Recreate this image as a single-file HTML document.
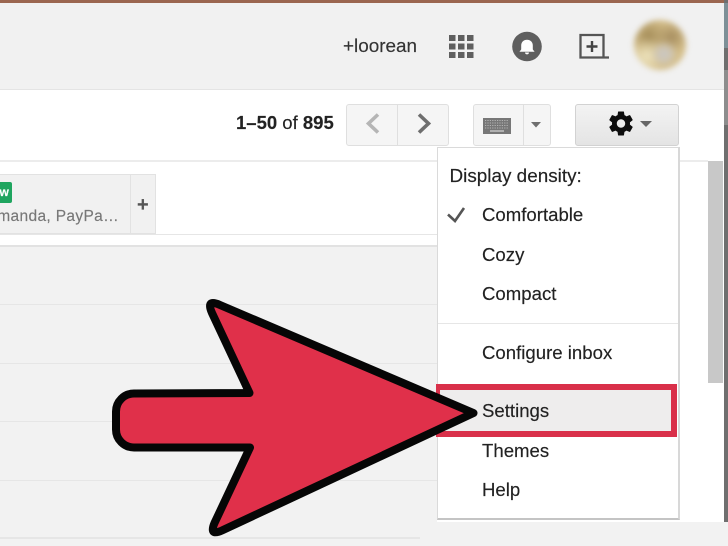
<!DOCTYPE html>
<html><head><meta charset="utf-8">
<style>
html,body{margin:0;padding:0;background:#fff}
#p{position:relative;width:728px;height:546px;overflow:hidden;background:#fff;font-family:"Liberation Sans",Arial,sans-serif;color:#222}
#p div,#p span.t{position:absolute}
.t{white-space:nowrap;line-height:1;filter:blur(.35px);-webkit-text-stroke:.15px currentColor}
.m{left:482px;font-size:18.6px;color:#222}
.btn{box-sizing:border-box;background:#f5f5f5;border:1px solid #dfdfdf;border-radius:3px;top:104px;height:42px}
.rl{left:0;width:437px;height:1px;background:#e6e6e6}
</style></head><body>
<div id="p">
<!-- top bar -->
<div style="left:0;top:0;width:728px;height:3px;background:#9b6650"></div>
<div style="left:0;top:3px;width:724px;height:86px;background:#f1f1f1"></div>
<div style="left:0;top:89px;width:724px;height:1px;background:#e4e4e4"></div>
<div style="left:724px;top:0;width:4px;height:522px;background:#6f6f6f"></div>
<div style="left:724px;top:3px;width:4px;height:45px;background:#7d9097"></div>
<div style="left:724px;top:70px;width:4px;height:55px;background:#8d8d8d"></div>

<span class="t" style="left:343px;top:38px;font-size:18.9px;color:#333">+loorean</span>
<svg style="position:absolute;left:0;top:0" width="728" height="546">
 <!-- grid -->
 <g fill="#5f5f5f">
  <rect x="449" y="35" width="6.5" height="6"/><rect x="458" y="35" width="6.5" height="6"/><rect x="467" y="35" width="6.5" height="6"/>
  <rect x="449" y="43.5" width="6.5" height="6"/><rect x="458" y="43.5" width="6.5" height="6"/><rect x="467" y="43.5" width="6.5" height="6"/>
  <rect x="449" y="52" width="6.5" height="6"/><rect x="458" y="52" width="6.5" height="6"/><rect x="467" y="52" width="6.5" height="6"/>
 </g>
 <!-- bell -->
 <circle cx="527" cy="46.5" r="14.8" fill="#5f5f5f"/>
 <path d="M520 51.5 L521.5 49.5 V45.5 C521.5 42 524 40 527 40 C530 40 532.5 42 532.5 45.5 V49.5 L534 51.5 Z" fill="#fff" stroke="#fff" stroke-width=".6"/>
 <path d="M525 52.5 H529 C529 55 525 55 525 52.5 Z" fill="#fff"/>
 <!-- new window -->
 <path d="M604.5 57.5 H580.5 V35 H603.5 V57.5 M603.5 57.5 H609" fill="none" stroke="#555" stroke-width="2.3"/>
 <path d="M592 41 V52 M586.5 46.5 H597.5" stroke="#444" stroke-width="2.4" fill="none"/>
</svg>
<!-- avatar -->
<div style="left:634px;top:20px;width:52px;height:50px;border-radius:50%;background:radial-gradient(circle at 58% 68%,#c9c6c4 0,#cfc6b4 14%,transparent 30%),radial-gradient(circle at 25% 72%,#ece2bc 0,transparent 35%),radial-gradient(circle at 28% 32%,#a48c58 0,transparent 38%),radial-gradient(circle at 72% 34%,#a58c5e 0,transparent 33%),#d4be8a;filter:blur(3px)"></div>

<!-- toolbar -->
<span class="t" style="left:236px;top:114px;font-size:18.5px;font-weight:bold;color:#222">1–50 <span style="font-weight:normal">of</span> 895</span>
<div class="btn" style="left:346px;width:103px"></div>
<div style="left:397px;top:105px;width:1px;height:40px;background:#dfdfdf"></div>
<div class="btn" style="left:473px;width:78px"></div>
<div style="left:523px;top:105px;width:1px;height:40px;background:#dfdfdf"></div>
<div class="btn" style="left:575px;width:104px;background:linear-gradient(#f3f3f3,#e4e4e4);border-color:#d2d2d2"></div>
<svg style="position:absolute;left:0;top:0" width="728" height="546">
 <path d="M378 114.5 L368.5 123.5 L378 132.5" fill="none" stroke="#b5b5b5" stroke-width="3.6"/>
 <path d="M419 114.5 L428.5 123.5 L419 132.5" fill="none" stroke="#6e6e6e" stroke-width="3.6"/>
 <rect x="483" y="118" width="28" height="16" fill="#777"/>
 <g stroke="#b4b4b4" stroke-width="1" stroke-dasharray="1.2 1.2" fill="none">
  <path d="M485 120.5 H509 M485 123 H509 M485 125.5 H509 M485 128 H509"/>
 </g>
 <path d="M490 131 H504" stroke="#c8c8c8" stroke-width="1.4"/>
 <path d="M531 122 H541 L536 127.5 Z" fill="#6f6f6f"/>
 <path d="M640 121 H652 L646 127 Z" fill="#666"/>
 <!-- gear -->
 <g transform="translate(606.6,109.1) scale(1.2)">
  <path d="M19.43 12.98c.04-.32.07-.64.07-.98s-.03-.66-.07-.98l2.11-1.65c.19-.15.24-.42.12-.64l-2-3.46c-.12-.22-.39-.3-.61-.22l-2.49 1c-.52-.4-1.08-.73-1.69-.98l-.38-2.65C14.46 2.18 14.25 2 14 2h-4c-.25 0-.46.18-.49.42l-.38 2.65c-.61.25-1.17.59-1.69.98l-2.49-1c-.23-.09-.49 0-.61.22l-2 3.46c-.13.22-.07.49.12.64l2.11 1.65c-.04.32-.07.65-.07.98s.03.66.07.98l-2.11 1.65c-.19.15-.24.42-.12.64l2 3.46c.12.22.39.3.61.22l2.49-1c.52.4 1.08.73 1.69.98l.38 2.65c.03.24.24.42.49.42h4c.25 0 .46-.18.49-.42l.38-2.65c.61-.25 1.17-.59 1.69-.98l2.49 1c.23.09.49 0 .61-.22l2-3.46c.12-.22.07-.49-.12-.64l-2.11-1.65zM12 15.5c-1.93 0-3.5-1.57-3.5-3.5s1.57-3.5 3.5-3.5 3.5 1.57 3.5 3.5-1.57 3.5-3.5 3.5z" fill="#0d0d0d"/>
 </g>
</svg>
<div style="left:0;top:160px;width:708px;height:1.5px;background:#ececec"></div>

<!-- tabs -->
<div style="box-sizing:border-box;left:-2px;top:174px;width:158px;height:60px;background:#f1f1f1;border:1px solid #e2e2e2"></div>
<div style="left:130px;top:174px;width:1px;height:60px;background:#e2e2e2"></div>
<div style="left:0;top:182px;width:12px;height:21px;background:#1fa55f;border-radius:0 2px 2px 0"></div>
<span class="t" style="left:0;top:186px;font-size:12px;font-weight:bold;color:#fff;margin-left:-.5px">w</span>
<span class="t" style="right:609px;top:209px;font-size:15.5px;color:#777;letter-spacing:.35px">manda, PayPa…</span>
<span class="t" style="left:137px;top:195px;font-size:20px;font-weight:bold;color:#555">+</span>
<div style="left:0;top:234px;width:437px;height:1px;background:#e6e6e6"></div>

<!-- list -->
<div style="left:0;top:245px;width:437px;height:301px;background:#f2f2f2"></div>
<div style="left:0;top:245px;width:437px;height:2px;background:#e2e2e2"></div>
<div class="rl" style="top:304px"></div>
<div class="rl" style="top:363px"></div>
<div class="rl" style="top:421px"></div>
<div class="rl" style="top:480px"></div>
<div class="rl" style="top:537px;width:420px;height:2px"></div>

<!-- bottom band + scrollbar -->
<div style="left:437px;top:522px;width:291px;height:24px;background:#f2f2f2"></div>
<div style="left:708px;top:161px;width:15px;height:222px;background:#c8c8c8"></div>

<!-- menu -->
<div style="box-sizing:border-box;left:437px;top:147px;width:243px;height:373px;background:#fff;border:1px solid #dadada;border-bottom:2px solid #c4c4c4;border-right:2px solid #d8d8d8"></div>
<span class="t" style="left:449.5px;top:168px;font-size:18.9px;color:#222">Display density:</span>
<svg style="position:absolute;left:0;top:0" width="728" height="546"><path d="M448 214.5 L455 221 L464 208" fill="none" stroke="#555" stroke-width="2.6"/></svg>
<span class="t m" style="top:206px">Comfortable</span>
<span class="t m" style="top:246px">Cozy</span>
<span class="t m" style="top:285px">Compact</span>
<div style="left:438px;top:323px;width:240px;height:1px;background:#e6e6e6"></div>
<span class="t m" style="top:344px">Configure inbox</span>
<div style="box-sizing:border-box;left:436px;top:384px;width:241px;height:53px;background:#eeeded;border:6px solid #d9304a;border-left-width:4px"></div>
<span class="t m" style="top:402px">Settings</span>
<span class="t m" style="top:442px">Themes</span>
<span class="t m" style="top:481px">Help</span>

<!-- arrow -->
<svg style="position:absolute;left:0;top:0" width="728" height="546">
 <path d="M116 411.5 A18 18 0 0 1 134 393.5 L249.5 393 L212 313 Q205.5 298.5 220 305 L473.5 413 L223 530 Q208.5 537 214.5 523 L250 447.5 L134 447.5 A18 18 0 0 1 116 429.5 Z" fill="#e0304a" stroke="#060606" stroke-width="8" stroke-linejoin="round"/>
</svg>
</div>
</body></html>
